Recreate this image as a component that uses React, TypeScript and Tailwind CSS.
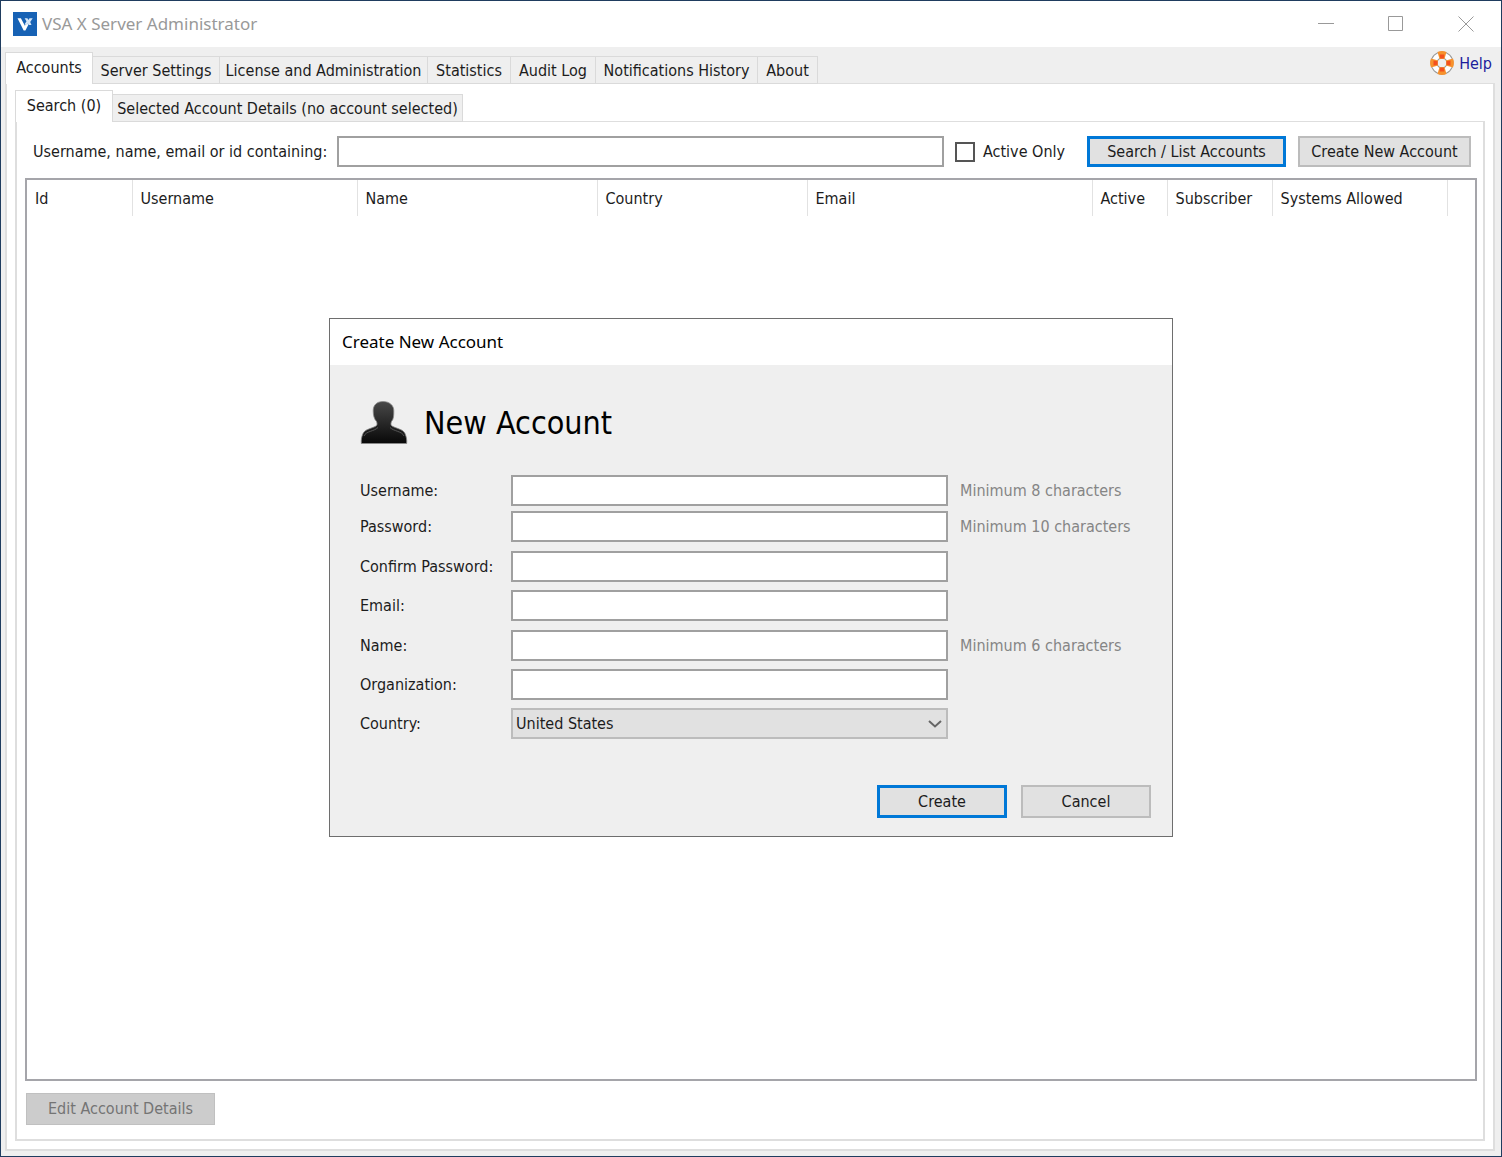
import { useState } from 'react';

const mainTabs = [
  { label: 'Accounts', width: 'w-[88px]' },
  { label: 'Server Settings', width: 'w-[127px]' },
  { label: 'License and Administration', width: 'w-[208px]' },
  { label: 'Statistics', width: 'w-[83px]' },
  { label: 'Audit Log', width: 'w-[85px]' },
  { label: 'Notifications History', width: 'w-[162px]' },
  { label: 'About', width: 'w-[60px]' },
];

const accountTabs = [
  { label: 'Search (0)', width: 'w-[98px]' },
  { label: 'Selected Account Details (no account selected)', width: 'w-[350px]' },
];

const columns = [
  { label: 'Id', width: 'w-[105px]' },
  { label: 'Username', width: 'w-[225px]' },
  { label: 'Name', width: 'w-[240px]' },
  { label: 'Country', width: 'w-[210px]' },
  { label: 'Email', width: 'w-[285px]' },
  { label: 'Active', width: 'w-[75px]' },
  { label: 'Subscriber', width: 'w-[105px]' },
  { label: 'Systems Allowed', width: 'w-[175px]' },
];

interface Tab {
  label: string;
  width: string;
}

interface TabStripProps {
  tabs: Tab[];
  active: string;
  onSelect: (label: string) => void;
}

function TabStrip({ tabs, active, onSelect }: TabStripProps) {
  return (
    <div role="tablist" className="relative z-10 -mb-px flex items-end">
      {tabs.map((tab) =>
        tab.label === active ? (
          <button
            key={tab.label}
            role="tab"
            aria-selected="true"
            className={`h-8 ${tab.width} shrink-0 whitespace-nowrap border border-b-0 border-[#dadada] bg-white pb-[2px]`}
          >
            {tab.label}
          </button>
        ) : (
          <button
            key={tab.label}
            role="tab"
            aria-selected="false"
            onClick={() => onSelect(tab.label)}
            className={`h-7 ${tab.width} shrink-0 whitespace-nowrap border border-l-0 border-[#dadada] bg-[#efefef] pt-[2px]`}
          >
            {tab.label}
          </button>
        )
      )}
    </div>
  );
}

function Logo() {
  return (
    <svg viewBox="0 0 24 24" className="h-6 w-6">
      <rect width="24" height="24" fill="#1762b5" />
      <path d="M4.500 6.200h3.400l4 7.600 1.200-2.200 2.400 1-3.100 6h-1.700z" fill="#fff" />
      <path d="M11.600 6.200h2.800l1 1.700 1.100-1.700h3.200l-2.500 3.700 1.300 3h-2.700l-.9-1.300-1.100 1.300-2.200-.6 1.900-3z" fill="#d5e6f8" />
    </svg>
  );
}

function LifeRing() {
  return (
    <svg viewBox="0 0 24 24" className="h-6 w-6">
      <circle cx="12" cy="12" r="8" fill="none" stroke="#999" strokeWidth="7" />
      <circle cx="12" cy="12" r="8" fill="none" stroke="#fff" strokeWidth="5" />
      <g fill="#f7922d">
        <path d="M7.500 1q4.500-1.800 9 0l-2.100 7.200q-2.400-1-4.800 0z" />
        <path d="M7.500 23q4.500 1.800 9 0l-2.100-7.200q-2.400 1-4.800 0z" />
        <path d="M1 7.500q-1.800 4.500 0 9l7.200-2.100q-1-2.400 0-4.800z" />
        <path d="M23 7.500q1.800 4.500 0 9l-7.200-2.100q1-2.400 0-4.800z" />
      </g>
      <g fill="#f4511e">
        <path d="M9.500 3.500h5l-.8 4h-3.400z" />
        <path d="M9.500 20.500h5l-.8-4h-3.400z" />
        <path d="M3.500 9.500v5l4-.8v-3.400z" />
        <path d="M20.500 9.500v5l-4-.8v-3.400z" />
      </g>
    </svg>
  );
}

function PersonIcon() {
  return (
    <svg viewBox="0 0 48 46" className="h-[46px] w-12">
      <defs>
        <linearGradient id="person" x1="0" y1="0" x2="0" y2="1">
          <stop offset="0" stopColor="#484848" />
          <stop offset="1" stopColor="#080808" />
        </linearGradient>
      </defs>
      <path
        d="M23 1.500c-6.500 0-10 4-9.800 9.500 0 4.500 1 8 3.300 10.500.8 2 .8 3.500-.5 4.500C12 28.500 5 29 3 33.500 1.500 37 1 40 1.300 43.500h45.400c.3-3.500-.2-6.500-1.700-10-2-4.500-9-5-13-7.500-1.300-1-1.300-2.500-.5-4.500 2.300-2.500 2.300-6 2.300-10.500.2-5.500-4.300-9.500-10.800-9.500z"
        fill="url(#person)"
        stroke="#8a8a8a"
        strokeWidth="0.800"
      />
      <path d="M4 36c2-5 10-4.500 14-8.500M44 36c-2-5-10-4.500-14-8.500" fill="none" stroke="#555" strokeWidth="1" />
    </svg>
  );
}

interface FieldProps {
  id: string;
  label: string;
  type?: string;
  hint?: string;
}

function Field({ id, label, type = 'text', hint }: FieldProps) {
  return (
    <div className="flex items-center">
      <label htmlFor={id} className="w-[151px] shrink-0">{label}</label>
      <input id={id} type={type} className="h-[31px] w-[437px] border-2 border-[#a0a0a0] bg-white px-1 outline-none" />
      {hint && <span className="ml-3 text-[#858585]">{hint}</span>}
    </div>
  );
}

function CreateAccountDialog({ onClose }: { onClose: () => void }) {
  return (
    <div className="fixed inset-0 z-20 flex items-center justify-center pb-[2px]">
      <div role="dialog" aria-labelledby="dialog-title" className="w-[844px] border border-[#6e6e6e] bg-[#efefef]">
        <div id="dialog-title" className="flex h-[46px] items-center bg-white px-3 font-['Noto_Sans','Open_Sans',sans-serif] text-[17px] text-black">
          Create New Account
        </div>
        <form className="px-[30px] pb-[18px] pt-[34px]" onSubmit={(e) => e.preventDefault()}>
          <div className="flex items-center gap-4">
            <PersonIcon />
            <h1 className="text-[32px] leading-[48px] text-black">New Account</h1>
          </div>
          <div className="mt-7 flex flex-col gap-[9px]">
            <div className="flex flex-col gap-[5px]">
              <Field id="username" label="Username:" hint="Minimum 8 characters" />
              <Field id="password" label="Password:" type="password" hint="Minimum 10 characters" />
            </div>
            <div className="flex flex-col gap-2">
              <Field id="confirm" label="Confirm Password:" type="password" />
              <Field id="email" label="Email:" type="email" />
            </div>
            <div className="flex flex-col gap-2">
              <Field id="name" label="Name:" hint="Minimum 6 characters" />
              <Field id="organization" label="Organization:" />
              <div className="flex items-center">
                <label htmlFor="country" className="w-[151px] shrink-0">Country:</label>
                <div className="relative w-[437px]">
                  <select id="country" className="block h-[31px] w-full appearance-none border-2 border-[#bcbcbc] bg-[#e1e1e1] px-[3px] outline-none">
                    <option>United States</option>
                  </select>
                  <svg viewBox="0 0 14 8" className="pointer-events-none absolute right-[6px] top-3 h-2 w-[14px]">
                    <path d="M1 1l6 5.500L13 1" fill="none" stroke="#666" strokeWidth="2" />
                  </svg>
                </div>
              </div>
            </div>
          </div>
          <div className="-mr-[9px] mt-[46px] flex justify-end gap-[14px]">
            <button type="submit" className="h-[33px] w-[130px] border-[3px] border-[#0078d7] bg-[#e1e1e1]">Create</button>
            <button type="button" onClick={onClose} className="h-[33px] w-[130px] border-2 border-[#bcbcbc] bg-[#e1e1e1]">Cancel</button>
          </div>
        </form>
      </div>
    </div>
  );
}

export default function App() {
  const [mainTab, setMainTab] = useState('Accounts');
  const [accountTab, setAccountTab] = useState('Search (0)');
  const [dialogOpen, setDialogOpen] = useState(true);

  return (
    <div className="flex min-h-screen flex-col border border-[#1f3c5f] bg-[#efefef] font-['DejaVu_Sans_Condensed','Noto_Sans',sans-serif] text-[16px] leading-5 text-[#1c1c1c]">
      <header className="flex h-[46px] items-center bg-white pl-3">
        <Logo />
        <span className="ml-[5px] font-['Noto_Sans','Open_Sans',sans-serif] text-[17px] text-[#999]">
          VSA X Server Administrator
        </span>
        <div className="ml-auto flex">
          <button aria-label="Minimize" className="flex h-[46px] w-[70px] items-center justify-center">
            <svg viewBox="0 0 16 16" className="h-4 w-4"><path d="M0 7.500h16" stroke="#999" /></svg>
          </button>
          <button aria-label="Maximize" className="flex h-[46px] w-[70px] items-center justify-center">
            <svg viewBox="0 0 16 16" className="h-4 w-4"><path d="M.5.5h14v14H.5z" fill="none" stroke="#999" /></svg>
          </button>
          <button aria-label="Close" className="flex h-[46px] w-[70px] items-center justify-center">
            <svg viewBox="0 0 16 16" className="h-4 w-4"><path d="M.5.5l15 15M15.500.5l-15 15" stroke="#999" /></svg>
          </button>
        </div>
      </header>

      <div className="flex flex-1 flex-col pb-[5px] pl-1 pr-[6px]">
        <div className="flex items-end justify-between">
          <TabStrip tabs={mainTabs} active={mainTab} onSelect={setMainTab} />
          <a href="#help" className="flex h-9 items-start gap-[5px] pr-[3px] pt-1 text-[#1c1c9c]">
            <LifeRing />
            <span className="leading-[26px]">Help</span>
          </a>
        </div>

        <main className="flex flex-1 flex-col border-2 border-t border-[#dedede] bg-white px-2 pb-2 pt-[6px]">
          <TabStrip tabs={accountTabs} active={accountTab} onSelect={setAccountTab} />

          <section className="flex flex-1 flex-col border-2 border-t border-[#dedede] pb-[14px] pl-2 pr-[6px] pt-[14px]">
            <div className="flex items-center pl-2 pr-[6px]">
              <label htmlFor="filter" className="w-[304px] shrink-0">Username, name, email or id containing:</label>
              <input id="filter" type="text" className="h-[31px] min-w-0 flex-1 border-2 border-[#a0a0a0] bg-white px-1 outline-none" />
              <input id="active-only" type="checkbox" className="ml-[11px] h-5 w-5 shrink-0 appearance-none border-2 border-[#555] bg-white checked:bg-[#555]" />
              <label htmlFor="active-only" className="ml-2 w-[104px] shrink-0">Active Only</label>
              <button className="h-[31px] w-[199px] shrink-0 border-[3px] border-[#0078d7] bg-[#e1e1e1]">Search / List Accounts</button>
              <button onClick={() => setDialogOpen(true)} className="ml-3 h-[31px] w-[173px] shrink-0 border-2 border-[#bcbcbc] bg-[#e1e1e1]">
                Create New Account
              </button>
            </div>

            <div className="mt-[11px] flex-1 border-2 border-[#a5a5aa] bg-white">
              <table className="w-full table-fixed border-collapse">
                <thead>
                  <tr className="h-9">
                    {columns.map((column) => (
                      <th key={column.label} className={`${column.width} border-r border-[#e2e2e2] px-2 pt-[2px] text-left font-normal`}>
                        {column.label}
                      </th>
                    ))}
                    <td />
                  </tr>
                </thead>
              </table>
            </div>

            <button disabled className="ml-px mt-3 h-8 w-[189px] border border-[#c0c0c0] bg-[#cccccc] text-[#747474]">
              Edit Account Details
            </button>
          </section>
        </main>
      </div>

      {dialogOpen && <CreateAccountDialog onClose={() => setDialogOpen(false)} />}
    </div>
  );
}
